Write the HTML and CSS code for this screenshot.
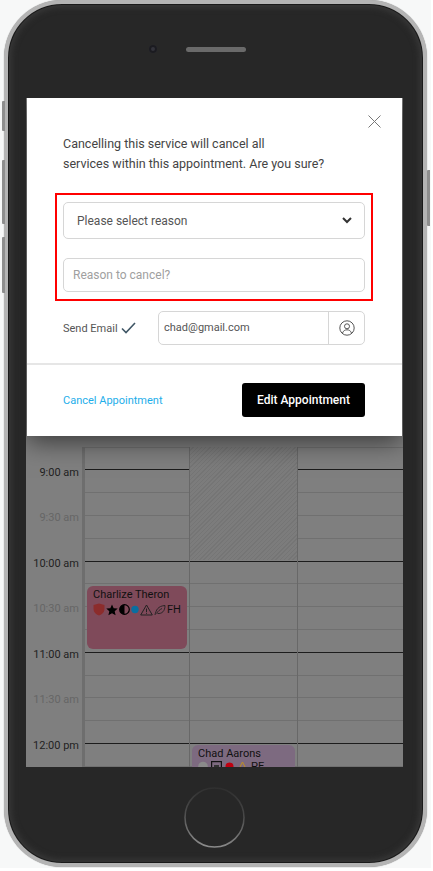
FILE: index.html
```html
<!DOCTYPE html>
<html lang="en">
<head>
  <meta charset="UTF-8" />
  <title>Cancel Appointment</title>
  <link rel="stylesheet" href="styles.css">
</head>
<body>

  <div class="stage">
    <div class="phone">
      <span class="side-btn btn-mute"></span>
      <span class="side-btn btn-up"></span>
      <span class="side-btn btn-down"></span>
      <span class="side-btn btn-power"></span>

      <div class="earpiece">
        <span class="camera"></span>
        <span class="speaker"></span>
      </div>

      <div class="screen">
        <div class="calendar">
          <div class="times">
            <div class="time">9:00 am</div>
            <div class="time half">9:30 am</div>
            <div class="time">10:00 am</div>
            <div class="time half">10:30 am</div>
            <div class="time">11:00 am</div>
            <div class="time half">11:30 am</div>
            <div class="time">12:00 pm</div>
          </div>

          <div class="day day-first">
            <div class="slot"></div><div class="slot hour"></div><div class="slot"></div><div class="slot"></div>
            <div class="slot"></div><div class="slot hour"></div><div class="slot"></div><div class="slot"></div>
            <div class="slot"></div><div class="slot hour"></div><div class="slot"></div><div class="slot"></div>
            <div class="slot"></div><div class="slot hour"></div><div class="slot"></div>

            <div class="event event-pink">
              <div class="event-name">Charlize Theron</div>
              <div class="event-icons">
                <svg width="12" height="13" viewBox="0 0 12 13"><path d="M6 .5 11.500 2v4c0 3.200-2.300 5.500-5.500 6.500C2.800 11.500.5 9.200.5 6V2z" fill="#8c2c2c"/></svg>
                <svg width="12" height="12" viewBox="0 0 12 12"><path d="M6 .5 7.700 4.200l4 .4-3 2.700.9 4L6 9.200l-3.600 2.100.9-4-3-2.700 4-.4z" fill="#000"/></svg>
                <svg width="11" height="11" viewBox="0 0 11 11"><circle cx="5.500" cy="5.500" r="4.800" fill="none" stroke="#000" stroke-width="1.200"/><path d="M5.500.7a4.800 4.800 0 0 0 0 9.600z" fill="#000"/></svg>
                <svg width="8" height="11" viewBox="0 0 8 11"><circle cx="4" cy="5.500" r="3.700" fill="#0a6ea0"/></svg>
                <svg width="13" height="12" viewBox="0 0 13 12"><path d="M6.500 1 12.300 11H.7zM6.500 4.500v3.500M6.500 8.800v1" fill="none" stroke="#222" stroke-width="1"/></svg>
                <svg width="12" height="12" viewBox="0 0 12 12"><path d="M1 11C2 6 4 2 11 1.500 11 7 8 10 3.500 9.500M2.500 9.500C4 7 6 5.500 8 4.500" fill="none" stroke="#222" stroke-width=".9"/></svg>
                <span class="event-code">FH</span>
              </div>
            </div>
          </div>

          <div class="day day-second">
            <div class="blocked"></div>
            <div class="slot"></div><div class="slot hour"></div><div class="slot"></div><div class="slot"></div>
            <div class="slot"></div><div class="slot hour"></div><div class="slot"></div><div class="slot"></div>
            <div class="slot"></div><div class="slot hour"></div><div class="slot"></div><div class="slot"></div>
            <div class="slot"></div><div class="slot hour"></div><div class="slot"></div>

            <div class="event event-lilac">
              <div class="event-name">Chad Aarons</div>
              <div class="event-icons">
                <svg width="10" height="11" viewBox="0 0 10 11"><circle cx="5" cy="5.500" r="4.800" fill="#8a8a8a"/></svg>
                <svg width="11" height="11" viewBox="0 0 11 11"><rect x=".6" y=".6" width="9.800" height="9.800" fill="none" stroke="#111" stroke-width="1.200"/><rect x="3" y="4" width="5" height="4" fill="#333"/></svg>
                <svg width="9" height="11" viewBox="0 0 9 11"><circle cx="4.500" cy="5.500" r="4" fill="#c00010"/></svg>
                <svg width="11" height="11" viewBox="0 0 11 11"><path d="M5.500 1 10 10H1z" fill="none" stroke="#c09020" stroke-width="1"/></svg>
                <span class="event-code">PE</span>
              </div>
            </div>
          </div>

          <div class="day">
            <div class="slot"></div><div class="slot hour"></div><div class="slot"></div><div class="slot"></div>
            <div class="slot"></div><div class="slot hour"></div><div class="slot"></div><div class="slot"></div>
            <div class="slot"></div><div class="slot hour"></div><div class="slot"></div><div class="slot"></div>
            <div class="slot"></div><div class="slot hour"></div><div class="slot"></div>
          </div>
        </div>

        <div class="modal">
          <div class="modal-body">
            <button class="close" aria-label="Close">
              <svg width="13" height="13" viewBox="0 0 13 13"><path d="M.5.5l12 12M12.500.5l-12 12" fill="none" stroke="#777" stroke-width="1"/></svg>
            </button>
            <p class="message">Cancelling this service will cancel all<br>services within this appointment. Are you sure?</p>

            <div class="reason-box">
              <div class="select">
                <span>Please select reason</span>
                <svg width="10" height="7" viewBox="0 0 10 7"><path d="M1 1l4 4 4-4" fill="none" stroke="#333" stroke-width="2"/></svg>
              </div>
              <div class="input placeholder">Reason to cancel?</div>
            </div>

            <div class="email-row">
              <div class="send-email">
                <span>Send Email</span>
                <svg width="15" height="12" viewBox="0 0 15 12"><path d="M1 6.500 5 10.500 14 1" fill="none" stroke="#3f5665" stroke-width="1.600"/></svg>
              </div>
              <div class="email-field">
                <span class="email-value">chad@gmail.com</span>
                <span class="email-icon">
                  <svg width="16" height="16" viewBox="0 0 16 16"><circle cx="8" cy="8" r="7.200" fill="none" stroke="#555" stroke-width="1"/><circle cx="8" cy="6.300" r="2.500" fill="none" stroke="#555" stroke-width="1"/><path d="M3.500 13c.8-2.200 2.500-3.200 4.500-3.200s3.700 1 4.500 3.200" fill="none" stroke="#555" stroke-width="1"/></svg>
                </span>
              </div>
            </div>
          </div>

          <div class="modal-footer">
            <a class="cancel-link">Cancel Appointment</a>
            <button class="edit-btn">Edit Appointment</button>
          </div>
        </div>
      </div>

      <div class="home-btn">
        <svg width="61" height="61" viewBox="0 0 61 61">
          <defs>
            <linearGradient id="ring" x1="0.7" y1="0" x2="0.6" y2="1">
              <stop offset="0" stop-color="#2e2e2e"/>
              <stop offset="0.45" stop-color="#4a4a4a"/>
              <stop offset="1" stop-color="#8a8a8a"/>
            </linearGradient>
          </defs>
          <circle cx="30.500" cy="30.500" r="29.500" fill="none" stroke="url(#ring)" stroke-width="1.500"/>
        </svg>
      </div>
    </div>
  </div>

</body>
</html>
```

FILE: styles.css
```css
body {
  margin: 0;
  background: #fff;
  font-family: 'Roboto', 'Liberation Sans', sans-serif;
}

.stage {
  width: 431px;
  height: 868px;
  background: #f7f8f8;
  padding-left: 4px;
  box-sizing: border-box;
}

.phone {
  position: relative;
  width: 423px;
  height: 867px;
  box-sizing: border-box;
  border: 4px solid #b4b4b4;
  border-radius: 58px;
  background: #272727;
  box-shadow: inset 0 0 0 1px #1a1a1a, inset 0 0 6px 3px #3a3a3a, 0 0 1px #888;
  padding: 0 20px 0 18px;
}

.side-btn {
  position: absolute;
  width: 3px;
  left: -6px;
  background: #8e8e8e;
  border-radius: 1px 0 0 1px;
}

.btn-mute { top: 97px; height: 30px; }
.btn-up { top: 156px; height: 64px; }
.btn-down { top: 233px; height: 56px; }
.btn-power { left: auto; right: -7px; top: 166px; height: 56px; }

.earpiece {
  height: 90px;
  margin-bottom: 4px;
  display: flex;
  align-items: center;
  padding: 0 0 0 123px;
  box-sizing: border-box;
  gap: 29px;
}

.earpiece .camera {
  width: 8px;
  height: 8px;
  border-radius: 50%;
  background: #33333b;
  box-shadow: inset 0 0 0 2px #1b1b20;
}

.earpiece .speaker {
  width: 60px;
  height: 5px;
  border-radius: 3px;
  background: #6a6a6a;
}

.screen {
  position: relative;
  width: 377px;
  height: 669px;
  overflow: hidden;
  background: #7f7f7f;
}

.calendar {
  display: flex;
  height: 100%;
  padding-top: 348.6px;
  box-sizing: border-box;
}

.times {
  width: 56px;
  padding: 3px 3px 0 0;
  box-sizing: border-box;
}

.time {
  height: 45.5px;
  line-height: 46px;
  text-align: right;
  font-size: 11px;
  color: #1f1f1f;
}

.time.half {
  color: #666;
}

.day {
  position: relative;
  flex: none;
  border-right: 1px solid #686868;
  box-sizing: border-box;
}

.day-first {
  width: 108px;
  border-left: 3px solid #6e6e6e;
}

.day-second {
  width: 108px;
}

.day:last-child {
  flex: 1;
  border-right: 0;
}

.slot {
  height: 22.8px;
  box-sizing: border-box;
  border-top: 1px solid #707070;
}

.slot.hour {
  border-top-color: #1c1c1c;
}

.blocked {
  position: absolute;
  top: 0;
  left: 0;
  right: 0;
  height: 113px;
  background: repeating-linear-gradient(135deg, #7c7c7c 0 2px, #757575 2px 3px);
}

.event {
  position: absolute;
  padding: 2px 0 0 6px;
  box-sizing: border-box;
  border-radius: 6px;
  font-size: 11px;
  color: #111;
  overflow: hidden;
}

.event-pink {
  left: 2px;
  top: 139px;
  width: 100px;
  height: 63px;
  background: #7f4a5a;
}

.event-lilac {
  left: 2px;
  top: 298px;
  width: 103px;
  height: 40px;
  background: #7d6a80;
}

.event-name {
  line-height: 14px;
}

.event-icons {
  display: flex;
  align-items: center;
  gap: 1px;
  height: 14px;
  margin-top: 1px;
}

.event-lilac .event-icons {
  gap: 3px;
  margin-top: -1px;
}

.event-code {
  font-size: 11px;
  line-height: 12px;
}

.modal {
  position: absolute;
  top: 0;
  left: 1px;
  width: 375px;
  height: 338px;
  background: #fff;
  box-shadow: 0 6px 24px rgba(0, 0, 0, 0.55);
}

.modal-body {
  position: relative;
  height: 267px;
  padding: 36px 37px 0 36px;
  box-sizing: border-box;
  border-bottom: 2px solid #e6e6e6;
}

.close {
  position: absolute;
  top: 17px;
  right: 21px;
  padding: 0;
  border: none;
  background: none;
  line-height: 0;
}

.message {
  margin: 0;
  font-size: 12.5px;
  line-height: 20px;
  color: #444;
}

.reason-box {
  margin: 19px -8px 0;
  padding: 7px 6px;
  height: 108px;
  box-sizing: border-box;
  border: 2px solid #f00;
}

.select {
  display: flex;
  justify-content: space-between;
  align-items: center;
  height: 37px;
  padding: 0 12px 0 13px;
  box-sizing: border-box;
  border: 1px solid #d6d6d6;
  border-radius: 5px;
  font-size: 12px;
  color: #555;
}

.input {
  display: flex;
  align-items: center;
  height: 34px;
  margin-top: 19px;
  padding-left: 9px;
  box-sizing: border-box;
  border: 1px solid #d6d6d6;
  border-radius: 5px;
  font-size: 12px;
}

.placeholder {
  color: #a0a0a0;
}

.email-row {
  display: flex;
  align-items: center;
  justify-content: space-between;
  margin-top: 10px;
}

.send-email {
  display: flex;
  align-items: center;
  gap: 3px;
  font-size: 11px;
  color: #555;
}

.email-field {
  display: flex;
  width: 207px;
  height: 34px;
  box-sizing: border-box;
  border: 1px solid #d6d6d6;
  border-radius: 5px;
}

.email-value {
  flex: 1;
  padding-left: 5px;
  font-size: 11px;
  line-height: 32px;
  color: #555;
}

.email-icon {
  width: 35px;
  display: flex;
  align-items: center;
  justify-content: center;
  border-left: 1px solid #d6d6d6;
}

.modal-footer {
  display: flex;
  align-items: center;
  justify-content: space-between;
  padding: 18px 37px 0 36px;
}

.cancel-link {
  font-size: 11px;
  color: #1eaeea;
}

.edit-btn {
  width: 123px;
  height: 34px;
  border: none;
  border-radius: 3px;
  background: #000;
  color: #fff;
  font-family: inherit;
  font-size: 12px;
  font-weight: 500;
}

.home-btn {
  display: flex;
  justify-content: center;
  padding-top: 20px;
  line-height: 0;
}
```
